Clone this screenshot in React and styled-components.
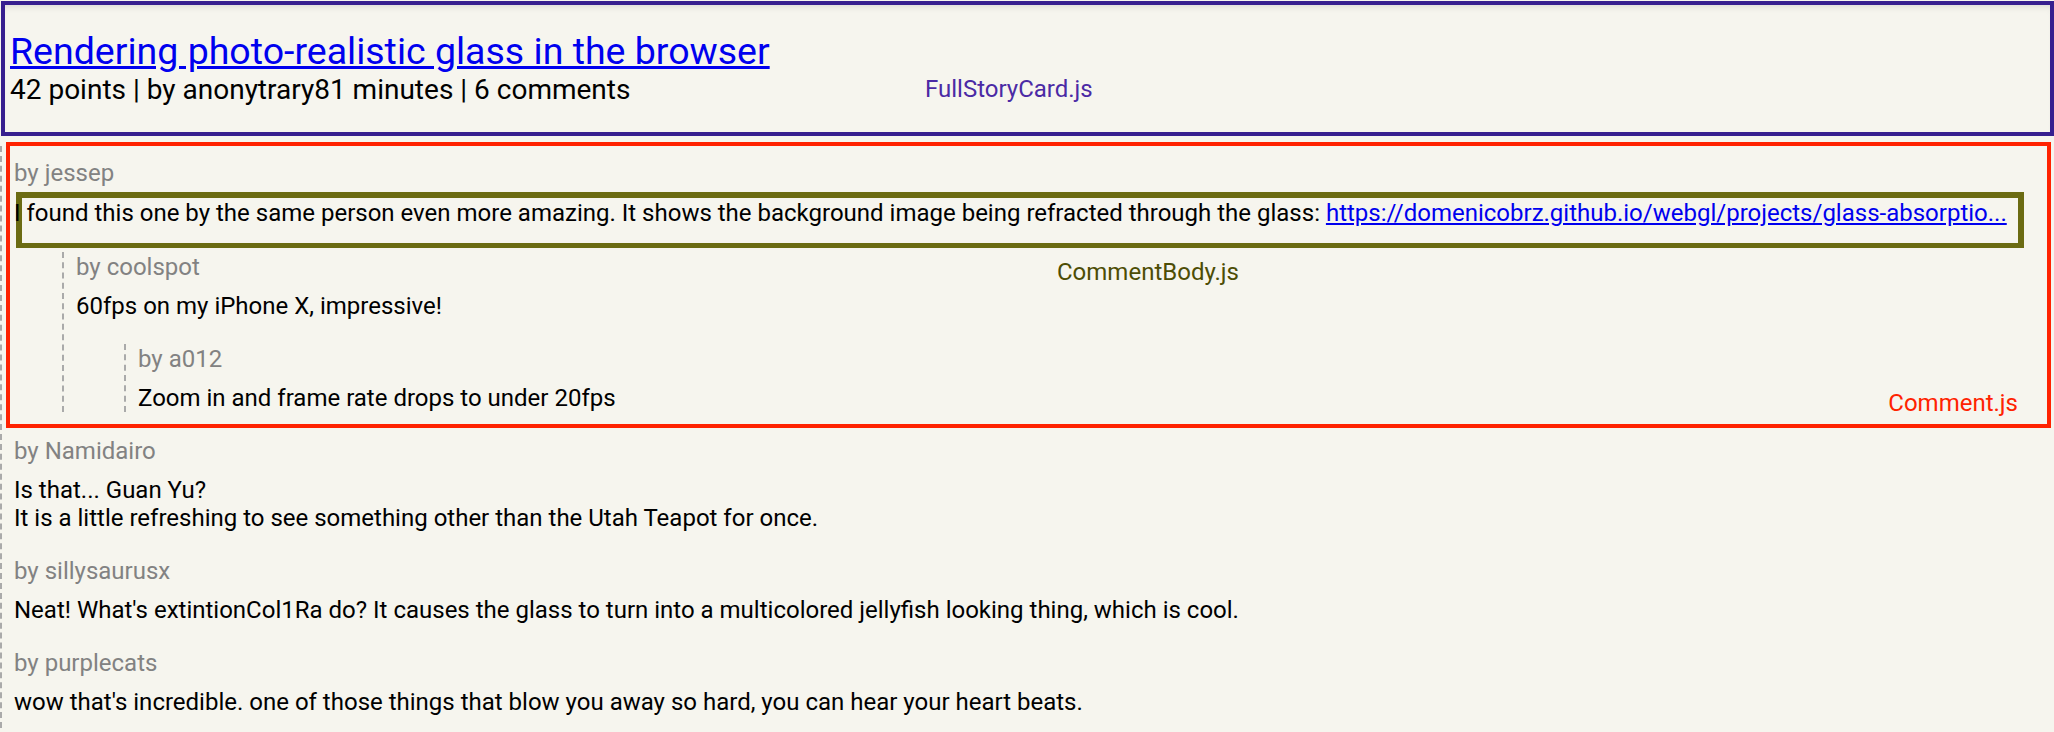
import React from 'react'
import styled, { createGlobalStyle } from 'styled-components'

const GlobalStyle = createGlobalStyle`
  body {
    margin: 0;
    background: #f6f5ee;
    font-family: Roboto, "Noto Sans", sans-serif;
  }
`

const story = {
  title: 'Rendering photo-realistic glass in the browser',
  points: 42,
  by: 'anonytrary',
  age: '81 minutes',
  comments: 6,
}

const comments = [
  {
    id: 1,
    by: 'jessep',
    highlight: true,
    text: 'I found this one by the same person even more amazing. It shows the background image being refracted through the glass: ',
    link: 'https://domenicobrz.github.io/webgl/projects/glass-absorptio...',
    kids: [
      {
        id: 2,
        by: 'coolspot',
        text: '60fps on my iPhone X, impressive!',
        kids: [{ id: 3, by: 'a012', text: 'Zoom in and frame rate drops to under 20fps' }],
      },
    ],
  },
  {
    id: 4,
    by: 'Namidairo',
    lines: ['Is that... Guan Yu?', 'It is a little refreshing to see something other than the Utah Teapot for once.'],
  },
  {
    id: 5,
    by: 'sillysaurusx',
    text: "Neat! What's extintionCol1Ra do? It causes the glass to turn into a multicolored jellyfish looking thing, which is cool.",
  },
  {
    id: 6,
    by: 'purplecats',
    text: "wow that's incredible. one of those things that blow you away so hard, you can hear your heart beats.",
  },
]

const StoryCard = styled.div`
  position: relative;
  margin: 1px 0 0 1px;
  border: 4px solid #371f8f;
  padding: 23px 5px 26px;
  box-shadow: inset 0 6px 8px -6px rgba(0, 0, 0, 0.16);
`

const Title = styled.a`
  display: block;
  width: fit-content;
  font-size: 37.5px;
  line-height: 46px;
  color: #0000ee;
  text-decoration: underline;
`

const Meta = styled.div`
  font-size: 28px;
  line-height: 32px;
  color: #000;
`

const Label = styled.span`
  position: absolute;
  font-size: 24px;
  line-height: 30px;
  white-space: nowrap;
  color: ${p => p.$color};
`

const CardLabel = styled(Label)`
  left: 920px;
  top: 69px;
`

const BodyLabel = styled(Label)`
  left: 1043px;
  top: calc(100% + 14px);
`

const CommentLabel = styled(Label)`
  right: 29px;
  bottom: 6px;
`

const Thread = styled.div`
  border-left: 2px dashed #aaa;
  padding-left: 8px;
  margin: ${p => (p.$nested ? '24px 0 0 48px' : '10px 7px 0 0')};
`

const CommentBox = styled.div`
  position: relative;
  padding: ${p => (p.$nested ? '0 4px' : '12px 4px')};
  outline: ${p => (p.$highlight ? '4px solid #ff2200' : 'none')};
`

const Author = styled.div`
  font-size: 24px;
  line-height: 30px;
  color: #828282;
  margin-bottom: 10px;
`

const Body = styled.div`
  position: relative;
  font-size: 24px;
  line-height: 28px;
  color: #000;

  a {
    color: #0000ee;
    text-decoration: underline;
  }

  ${p =>
    p.$outlined &&
    `
    width: fit-content;
    white-space: nowrap;
    margin: -6px 0 -20px 2px;
    border: 6px solid #6b6b12;
    border-bottom-width: 5px;
    padding: 1px 11px 16px 0;
    text-indent: -8px;
  `}
`

const Comment = ({ c, nested }) => (
  <CommentBox $nested={nested} $highlight={c.highlight}>
    <Author>by {c.by}</Author>
    <Body $outlined={c.highlight}>
      {c.lines
        ? c.lines.map((l, i) => (
            <React.Fragment key={i}>
              {i > 0 && <br />}
              {l}
            </React.Fragment>
          ))
        : c.text}
      {c.link && <a href="#">{c.link}</a>}
      {c.highlight && <BodyLabel $color="#4d4d05">CommentBody.js</BodyLabel>}
    </Body>
    {c.kids && (
      <Thread $nested>
        {c.kids.map(k => (
          <Comment key={k.id} c={k} nested />
        ))}
      </Thread>
    )}
    {c.highlight && <CommentLabel $color="#ff2200">Comment.js</CommentLabel>}
  </CommentBox>
)

export default function App() {
  return (
    <>
      <GlobalStyle />
      <StoryCard>
        <Title href="#">{story.title}</Title>
        <Meta>
          {story.points} points | by {story.by}{story.age} | {story.comments} comments
        </Meta>
        <CardLabel $color="#4b2aa5">FullStoryCard.js</CardLabel>
      </StoryCard>
      <Thread>
        {comments.map(c => (
          <Comment key={c.id} c={c} />
        ))}
      </Thread>
    </>
  )
}
